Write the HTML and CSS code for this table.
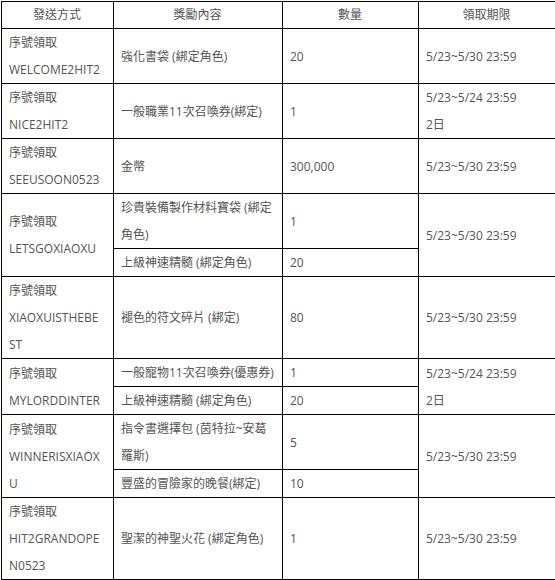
FILE: index.html
```html
<!DOCTYPE html>
<html lang="zh-Hant">
<head>
<meta charset="utf-8">
<link rel="stylesheet" href="styles.css">
</head>
<body>
<table class="rewards">
  <colgroup>
    <col class="c1"><col class="c2"><col class="c3"><col class="c4">
  </colgroup>
  <thead>
    <tr><th>發送方式</th><th>獎勵內容</th><th>數量</th><th>領取期限</th></tr>
  </thead>
  <tbody>
    <tr><td class="code">序號領取<br>WELCOME2HIT2</td><td>強化書袋 (綁定角色)</td><td>20</td><td>5/23~5/30 23:59</td></tr>
    <tr><td class="code">序號領取<br>NICE2HIT2</td><td>一般職業11次召喚券(綁定)</td><td>1</td><td>5/23~5/24 23:59<br>2日</td></tr>
    <tr><td class="code">序號領取<br>SEEUSOON0523</td><td>金幣</td><td>300,000</td><td>5/23~5/30 23:59</td></tr>
    <tr><td class="code" rowspan="2">序號領取<br>LETSGOXIAOXU</td><td>珍貴裝備製作材料寶袋 (綁定角色)</td><td>1</td><td rowspan="2">5/23~5/30 23:59</td></tr>
    <tr><td>上級神速精髓 (綁定角色)</td><td>20</td></tr>
    <tr><td class="code">序號領取<br>XIAOXUISTHEBEST</td><td>褪色的符文碎片 (綁定)</td><td>80</td><td>5/23~5/30 23:59</td></tr>
    <tr><td class="code" rowspan="2">序號領取<br>MYLORDDINTER</td><td>一般寵物11次召喚券(優惠券)</td><td>1</td><td rowspan="2">5/23~5/24 23:59<br>2日</td></tr>
    <tr><td>上級神速精髓 (綁定角色)</td><td>20</td></tr>
    <tr><td class="code" rowspan="2">序號領取<br>WINNERISXIAOXU</td><td>指令書選擇包 (茵特拉~安葛羅斯)</td><td>5</td><td rowspan="2">5/23~5/30 23:59</td></tr>
    <tr><td>豐盛的冒險家的晚餐(綁定)</td><td>10</td></tr>
    <tr><td class="code">序號領取<br>HIT2GRANDOPEN0523</td><td>聖潔的神聖火花 (綁定角色)</td><td>1</td><td>5/23~5/30 23:59</td></tr>
  </tbody>
</table>
</body>
</html>
```
FILE: styles.css
```css
html, body {
  background: #ffffff;
}
body {
  margin: 1px 0 0 1px;
  font-family: "Open Sans", "Noto Sans CJK TC", sans-serif;
  font-size: 12px;
  color: #555555;
}
.rewards {
  border-collapse: collapse;
  table-layout: fixed;
  width: 554px;
}
.c1 { width: 112px; }
.c2 { width: 169px; }
.c3 { width: 136px; }
.c4 { width: 137px; }
.rewards th,
.rewards td {
  border: 1px solid #000000;
  padding: 0 8px 0 7px;
  line-height: 27px;
  vertical-align: middle;
  word-break: break-all;
}
.rewards th {
  font-weight: normal;
  text-align: center;
  line-height: 26px;
}
.rewards td {
  text-align: left;
}
.rewards td.code {
  padding-right: 10px;
}
```
